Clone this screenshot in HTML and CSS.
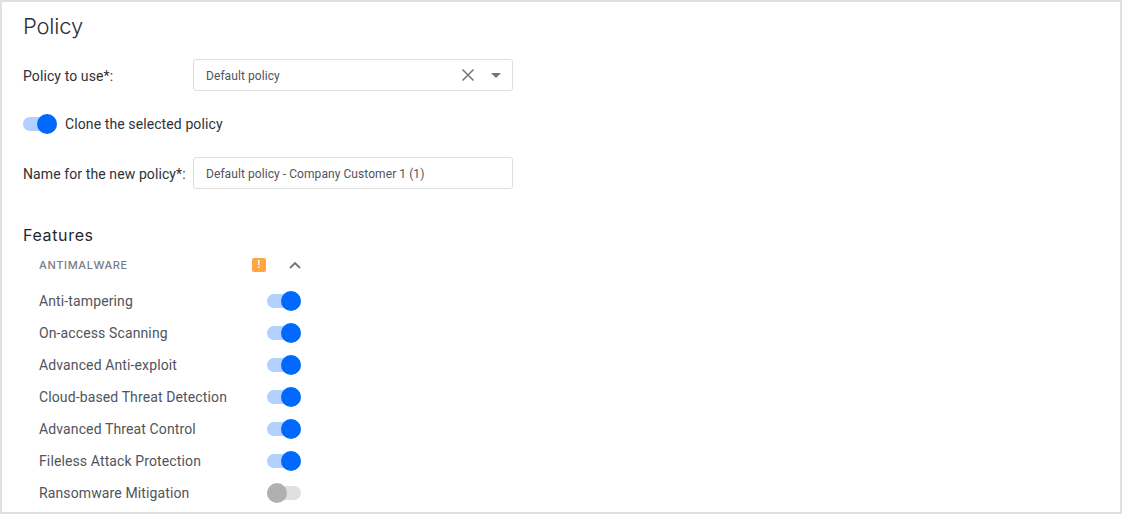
FILE: index.html
```html
<!DOCTYPE html>
<html lang="en">
<head>
<meta charset="utf-8">
<title>Policy</title>
<link rel="stylesheet" href="styles.css">
</head>
<body>
<main class="panel">
  <h1 class="title">Policy</h1>
  <div class="field field-first">
    <label class="field-label">Policy to use*:</label>
    <div class="input">
      <span class="input-text">Default policy</span>
      <svg class="icon-clear" width="14" height="14" viewBox="0 0 14 14"><path d="M1.5 1.5l11 11M12.5 1.5l-11 11" stroke="#757575" stroke-width="1.5" fill="none"/></svg>
      <svg class="icon-caret" width="10" height="5" viewBox="0 0 10 5"><path d="M0 0h10L5 5z" fill="#757575"/></svg>
    </div>
  </div>
  <div class="clone">
    <span class="toggle on"><span class="knob"></span></span>
    <span class="clone-label">Clone the selected policy</span>
  </div>
  <div class="field field-name">
    <label class="field-label">Name for the new policy*:</label>
    <div class="input"><span class="input-text">Default policy - Company Customer 1 (1)</span></div>
  </div>
  <h2 class="subtitle">Features</h2>
  <section class="features">
    <div class="group-head">
      <span class="group-title">ANTIMALWARE</span>
      <span class="warn">!</span>
      <svg class="chevron" width="12" height="7" viewBox="0 0 12 7"><path d="M1 6l5-5 5 5" stroke="#757575" stroke-width="1.8" fill="none"/></svg>
    </div>
    <div class="row"><span>Anti-tampering</span><span class="toggle on"><span class="knob"></span></span></div>
    <div class="row"><span>On-access Scanning</span><span class="toggle on"><span class="knob"></span></span></div>
    <div class="row"><span>Advanced Anti-exploit</span><span class="toggle on"><span class="knob"></span></span></div>
    <div class="row"><span>Cloud-based Threat Detection</span><span class="toggle on"><span class="knob"></span></span></div>
    <div class="row"><span>Advanced Threat Control</span><span class="toggle on"><span class="knob"></span></span></div>
    <div class="row"><span>Fileless Attack Protection</span><span class="toggle on"><span class="knob"></span></span></div>
    <div class="row"><span>Ransomware Mitigation</span><span class="toggle off"><span class="knob"></span></span></div>
  </section>
</main>
</body>
</html>
```
FILE: styles.css
```css
* { box-sizing: border-box; }
html, body { margin: 0; height: 100%; background: #fff; }
body { overflow: hidden; font-family: "Roboto", "Noto Sans", sans-serif; }
.panel {
  height: 514px;
  border: 2px solid #e0e0e0;
  padding: 0 21px;
  overflow: hidden;
}
.title {
  margin: 11px 0 0;
  font: 300 22px/26px Inter, sans-serif;
  letter-spacing: -0.2px;
  color: #2b2f38;
}
.field { display: flex; align-items: center; height: 32px; }
.field-first { margin-top: 20px; }
.field-name { margin-top: 17px; }
.field-label {
  width: 170px;
  flex: none;
  padding-top: 1px;
  white-space: nowrap;
  font-size: 14px;
  letter-spacing: 0.1px;
  color: #2e3138;
}
.input {
  width: 320px;
  height: 32px;
  display: flex;
  align-items: center;
  padding: 0 11px 0 12px;
  border: 1px solid #dedede;
  border-radius: 3px;
}
.input-text { flex: 1; padding-top: 1px; font-size: 12px; letter-spacing: 0.07px; color: #50545c; }
.icon-clear { margin-right: 16px; }
.clone { display: flex; align-items: center; gap: 8px; margin-top: 17px; height: 32px; }
.clone-label { font-size: 14px; letter-spacing: 0.1px; color: #2e3138; }
.toggle { position: relative; display: inline-block; width: 34px; height: 14px; border-radius: 7px; flex: none; }
.toggle.on { background: #b1d0ff; }
.toggle.off { background: #e0e0e0; }
.knob { position: absolute; top: -3px; width: 20px; height: 20px; border-radius: 50%; }
.toggle.on .knob { right: 0; background: #0068ff; }
.toggle.off .knob { left: 0; background: #b0b0b0; }
.subtitle {
  margin: 36px 0 0;
  font: 400 16px/20px Inter, sans-serif;
  letter-spacing: 0.65px;
  color: #23262d;
}
.features { width: 262px; margin-left: 16px; }
.group-head { display: flex; align-items: center; height: 20px; margin-top: 10px; }
.group-title { flex: 1; font: 500 11px/14px Inter, sans-serif; letter-spacing: 0.6px; color: #777b84; }
.warn {
  width: 14px; height: 14px; border-radius: 2px;
  background: #ffa640; color: #fff;
  font: 700 10px/14px "Liberation Sans", sans-serif;
  text-align: center;
  margin-right: 23px;
}
.row {
  display: flex;
  align-items: center;
  justify-content: space-between;
  height: 32px;
  font-size: 14px;
  letter-spacing: 0.12px;
  color: #50545c;
}
.group-head + .row { margin-top: 10px; }
```
